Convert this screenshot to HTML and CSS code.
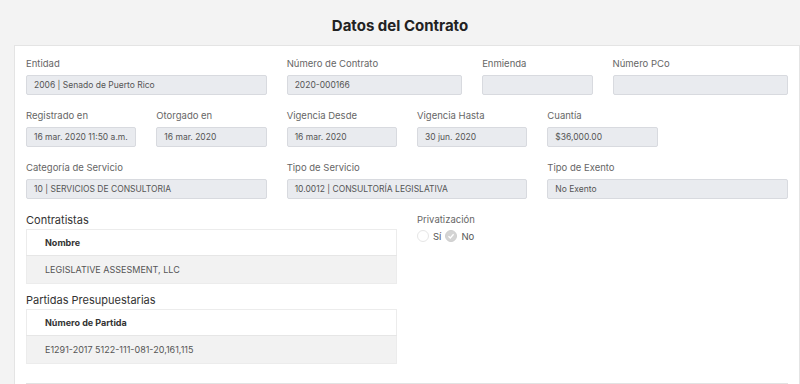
FILE: index.html
```html
<!DOCTYPE html>
<html lang="es">
<head>
    <meta charset="UTF-8">
    <meta name="viewport" content="width=device-width, initial-scale=1.0">
    <title>Datos del Contrato</title>
    <link rel="stylesheet" href="styles.css">
</head>
<body>
    <h1 class="page-title">Datos del Contrato</h1>
    <div class="card">
        <div class="form-row">
            <div class="field span-4">
                <label>Entidad</label>
                <div class="input">2006 | Senado de Puerto Rico</div>
            </div>
            <div class="field span-3">
                <label>Número de Contrato</label>
                <div class="input">2020-000166</div>
            </div>
            <div class="field span-2">
                <label>Enmienda</label>
                <div class="input"></div>
            </div>
            <div class="field span-3">
                <label>Número PCo</label>
                <div class="input"></div>
            </div>
        </div>
        <div class="form-row">
            <div class="field span-2">
                <label>Registrado en</label>
                <div class="input">16 mar. 2020 11:50 a.m.</div>
            </div>
            <div class="field span-2">
                <label>Otorgado en</label>
                <div class="input">16 mar. 2020</div>
            </div>
            <div class="field span-2">
                <label>Vigencia Desde</label>
                <div class="input">16 mar. 2020</div>
            </div>
            <div class="field span-2">
                <label>Vigencia Hasta</label>
                <div class="input">30 jun. 2020</div>
            </div>
            <div class="field span-2">
                <label>Cuantía</label>
                <div class="input">$36,000.00</div>
            </div>
        </div>
        <div class="form-row">
            <div class="field span-4">
                <label>Categoría de Servicio</label>
                <div class="input">10 | SERVICIOS DE CONSULTORIA</div>
            </div>
            <div class="field span-4">
                <label>Tipo de Servicio</label>
                <div class="input">10.0012 | CONSULTORÍA LEGISLATIVA</div>
            </div>
            <div class="field span-4">
                <label>Tipo de Exento</label>
                <div class="input">No Exento</div>
            </div>
        </div>
        <div class="form-row lower">
            <div class="span-6">
                <div class="section-title">Contratistas</div>
                <table class="data-table">
                    <thead><tr><th>Nombre</th></tr></thead>
                    <tbody><tr><td>LEGISLATIVE ASSESMENT, LLC</td></tr></tbody>
                </table>
                <div class="section-title second">Partidas Presupuestarias</div>
                <table class="data-table">
                    <thead><tr><th>Número de Partida</th></tr></thead>
                    <tbody><tr><td>E1291-2017 5122-111-081-20,161,115</td></tr></tbody>
                </table>
            </div>
            <div class="span-6">
                <label class="small-label">Privatización</label>
                <div class="radio-group">
                    <span class="radio"></span><span class="radio-text">Sí</span>
                    <span class="radio checked">
                        <svg width="8" height="8" viewBox="0 0 8 8"><path d="M1.5 4.2 L3.3 6 L6.6 2.2" fill="none" stroke="#fff" stroke-width="1.3"/></svg>
                    </span><span class="radio-text">No</span>
                </div>
            </div>
        </div>
        <div class="divider"></div>
    </div>
</body>
</html>
```

FILE: styles.css
```css
body {
    margin: 0;
    font-family: Inter, "Liberation Sans", sans-serif;
    background-color: #f3f3f3;
    color: #555;
}
.page-title {
    margin: 0;
    padding-top: 16px;
    font-size: 15px;
    line-height: 20px;
    font-weight: 700;
    color: #222;
    text-align: center;
}
.card {
    margin: 9px 0 0 14px;
    width: 762px;
    padding: 11px 11px 0;
    background-color: #ffffff;
    border: 1px solid #e4e4e4;
    border-bottom: none;
}
.form-row {
    display: grid;
    grid-template-columns: repeat(12, 1fr);
    column-gap: 20px;
    margin-bottom: 14px;
}
.form-row.lower {
    margin-bottom: 0;
}
.span-2 { grid-column: span 2; }
.span-3 { grid-column: span 3; }
.span-4 { grid-column: span 4; }
.span-6 { grid-column: span 6; }
.field > label,
.small-label {
    display: block;
    font-size: 9.5px;
    line-height: 13px;
    margin-bottom: 5px;
    color: #666;
}
.input {
    height: 20px;
    line-height: 18px;
    padding: 0 7px;
    box-sizing: border-box;
    border: 1px solid #d8dadf;
    border-radius: 2px;
    background-color: #e9ebef;
    font-size: 8.5px;
    color: #555;
    white-space: nowrap;
    overflow: hidden;
}
.section-title {
    font-size: 11px;
    line-height: 14px;
    margin-bottom: 2px;
    color: #333;
}
.section-title.second {
    margin-top: 9px;
}
.data-table {
    width: 100%;
    border-collapse: collapse;
    border: 1px solid #ececec;
    font-size: 9px;
}
.data-table th {
    height: 25px;
    padding: 0 18px;
    text-align: left;
    font-weight: 700;
    color: #333;
    background-color: #fff;
    border-bottom: 1px solid #e6e6e6;
}
.data-table td {
    height: 27px;
    padding: 0 18px;
    color: #555;
    background-color: #f2f2f2;
}
.radio-group {
    display: flex;
    align-items: center;
    margin-top: -1px;
}
.radio {
    width: 12px;
    height: 12px;
    box-sizing: border-box;
    border: 1px solid #e6e6e6;
    border-radius: 50%;
    background-color: #fff;
    display: flex;
    align-items: center;
    justify-content: center;
}
.radio.checked {
    border-color: #cfcfcf;
    background-color: #d4d4d4;
}
.radio-text {
    font-size: 9.5px;
    color: #555;
    margin: 0 4px;
}
.divider {
    margin-top: 19px;
    height: 2px;
    background-color: #e2e2e2;
}
```
